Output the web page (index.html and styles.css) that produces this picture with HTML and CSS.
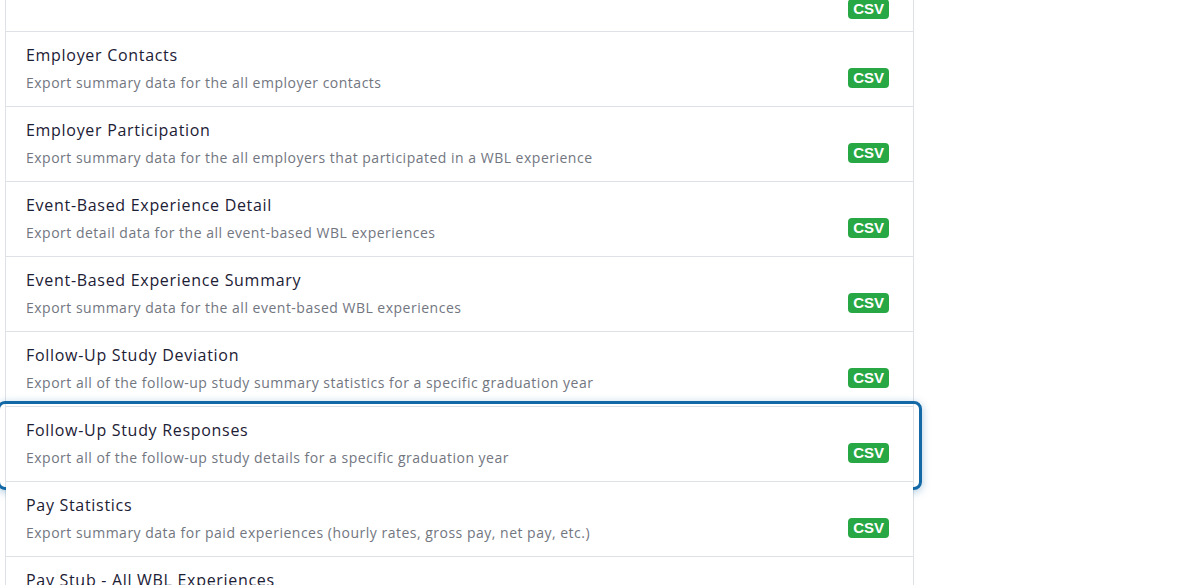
FILE: index.html
```html
<!DOCTYPE html>
<html lang="en">
<head>
    <meta charset="UTF-8">
    <meta name="viewport" content="width=device-width, initial-scale=1.0">
    <title>Reports</title>
    <link rel="stylesheet" href="styles.css">
</head>
<body>
    <div class="report-list">
        <div class="report-item first">
            <div class="report-text"></div>
            <span class="badge">CSV</span>
        </div>
        <div class="report-item">
            <div class="report-text">
                <div class="report-title">Employer Contacts</div>
                <div class="report-desc">Export summary data for the all employer contacts</div>
            </div>
            <span class="badge">CSV</span>
        </div>
        <div class="report-item">
            <div class="report-text">
                <div class="report-title">Employer Participation</div>
                <div class="report-desc">Export summary data for the all employers that participated in a WBL experience</div>
            </div>
            <span class="badge">CSV</span>
        </div>
        <div class="report-item">
            <div class="report-text">
                <div class="report-title">Event-Based Experience Detail</div>
                <div class="report-desc">Export detail data for the all event-based WBL experiences</div>
            </div>
            <span class="badge">CSV</span>
        </div>
        <div class="report-item">
            <div class="report-text">
                <div class="report-title">Event-Based Experience Summary</div>
                <div class="report-desc">Export summary data for the all event-based WBL experiences</div>
            </div>
            <span class="badge">CSV</span>
        </div>
        <div class="report-item">
            <div class="report-text">
                <div class="report-title">Follow-Up Study Deviation</div>
                <div class="report-desc">Export all of the follow-up study summary statistics for a specific graduation year</div>
            </div>
            <span class="badge">CSV</span>
        </div>
        <div class="report-item focused">
            <div class="report-text">
                <div class="report-title">Follow-Up Study Responses</div>
                <div class="report-desc">Export all of the follow-up study details for a specific graduation year</div>
            </div>
            <span class="badge">CSV</span>
        </div>
        <div class="report-item">
            <div class="report-text">
                <div class="report-title">Pay Statistics</div>
                <div class="report-desc">Export summary data for paid experiences (hourly rates, gross pay, net pay, etc.)</div>
            </div>
            <span class="badge">CSV</span>
        </div>
        <div class="report-item">
            <div class="report-text">
                <div class="report-title">Pay Stub - All WBL Experiences</div>
            </div>
        </div>
    </div>
</body>
</html>
```

FILE: styles.css
```css
body {
    margin: 0;
    background-color: #ffffff;
    font-family: "Open Sans", sans-serif;
    overflow: hidden;
}
.report-list {
    width: 907px;
    margin-left: 5px;
    margin-top: -69px; /* list is scrolled down a bit */
    border-left: 1px solid #dee2e6;
    border-right: 1px solid #dee2e6;
}
.report-item {
    position: relative;
    display: flex;
    justify-content: space-between;
    align-items: flex-start;
    height: 63px;
    padding: 11px 24px 0 20px;
    box-sizing: content-box;
    border-bottom: 1px solid #dee2e6;
    background-color: #ffffff;
}
.report-item.first {
    height: 89px;
}
.report-title {
    font-size: 16px;
    line-height: 24px;
    letter-spacing: 0.7px;
    color: #1c2035;
}
.report-desc {
    margin-top: 5px;
    font-size: 14px;
    line-height: 22px;
    letter-spacing: 0.5px;
    color: #72767f;
}
.badge {
    margin-top: 25px;
    padding: 0 5px;
    height: 20px;
    line-height: 20px;
    border-radius: 4px;
    background-color: #28a745;
    color: #ffffff;
    font-family: "Liberation Sans", Arial, sans-serif;
    font-weight: bold;
    font-size: 15px;
}
.report-item.first .badge {
    margin-top: 57px;
}
/* keyboard focus ring on the selected report */
.report-item.focused {
    border-top: 1px solid #dee2e6;
    margin-top: -1px;
}
.report-item.focused::after {
    content: "";
    position: absolute;
    top: -6px;
    bottom: -9px;
    left: -9px;
    right: -9px;
    border: 3px solid #1368a6;
    border-radius: 8px;
    box-shadow: 0 2px 8px rgba(19, 104, 166, 0.35);
    pointer-events: none;
}
```
